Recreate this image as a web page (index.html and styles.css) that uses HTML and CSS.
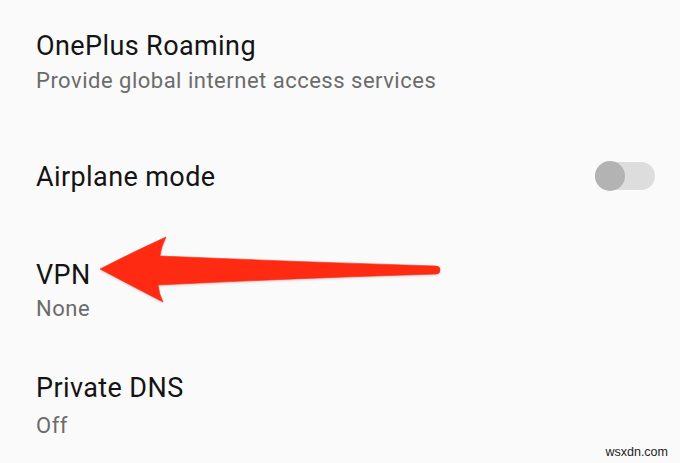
FILE: index.html
```html
<!DOCTYPE html>
<html>
<head>
<meta charset="utf-8">
<link rel="stylesheet" href="styles.css">
</head>
<body>
<div class="screen">
  <ul class="list">
    <li class="item item-roaming">
      <div class="title">OnePlus Roaming</div>
      <div class="sub sub-tight">Provide global internet access services</div>
    </li>
    <li class="item item-airplane">
      <div class="title">Airplane mode</div>
      <div class="toggle"><span class="knob"></span></div>
    </li>
    <li class="item item-vpn">
      <div class="title">VPN</div>
      <div class="sub sub-tighter">None</div>
    </li>
    <li class="item item-dns">
      <div class="title">Private DNS</div>
      <div class="sub">Off</div>
    </li>
  </ul>
  <svg class="arrow" width="680" height="463" viewBox="0 0 680 463">
    <path d="M100 269 Q135 251 166 237 Q161 247 160 256 Q300 262 436 266 A4 4 0 0 1 436 274 Q300 278 158 285 Q159 294 163 302 Q130 285 100 269 Z" fill="#ff2a12" stroke="#f52a14" stroke-width="0.6" stroke-linejoin="round"/>
  </svg>
  <div class="watermark">wsxdn.com</div>
</div>
</body>
</html>
```
FILE: styles.css
```css
html, body {
  margin: 0;
  padding: 0;
  background: #fafafa;
}
.screen {
  position: relative;
  width: 680px;
  height: 463px;
  overflow: hidden;
  font-family: Roboto, "Noto Sans", sans-serif;
}
.list {
  list-style: none;
  margin: 0;
  padding: 31px 25px 0 36px;
}
.item {
  display: flex;
  flex-direction: column;
}
.title {
  font-size: 27px;
  line-height: 30px;
  letter-spacing: 0.4px;
  color: #141414;
}
.sub {
  font-size: 22px;
  line-height: 20px;
  letter-spacing: 0.5px;
  margin-top: 13px;
  color: #6b6b6b;
}
.sub-tight {
  margin-top: 10px;
}
.sub-tighter {
  margin-top: 9px;
}
.item-airplane {
  flex-direction: row;
  align-items: center;
  justify-content: space-between;
  margin-top: 71px;
}
.item-vpn {
  margin-top: 68px;
}
.item-dns {
  margin-top: 54px;
}
.toggle {
  position: relative;
  width: 60px;
  height: 28px;
  margin-top: -3px;
  border-radius: 14px;
  background: #dddddd;
}
.knob {
  position: absolute;
  left: 0;
  top: -1px;
  width: 30px;
  height: 30px;
  border-radius: 50%;
  background: #b3b3b3;
}
.arrow {
  position: absolute;
  left: 0;
  top: 0;
  filter: drop-shadow(0 1px 1px rgba(0,0,0,0.18));
}
.watermark {
  position: absolute;
  right: 12px;
  bottom: 4px;
  font-family: "Liberation Sans", Arial, sans-serif;
  font-size: 12.5px;
  color: #222;
}
```
